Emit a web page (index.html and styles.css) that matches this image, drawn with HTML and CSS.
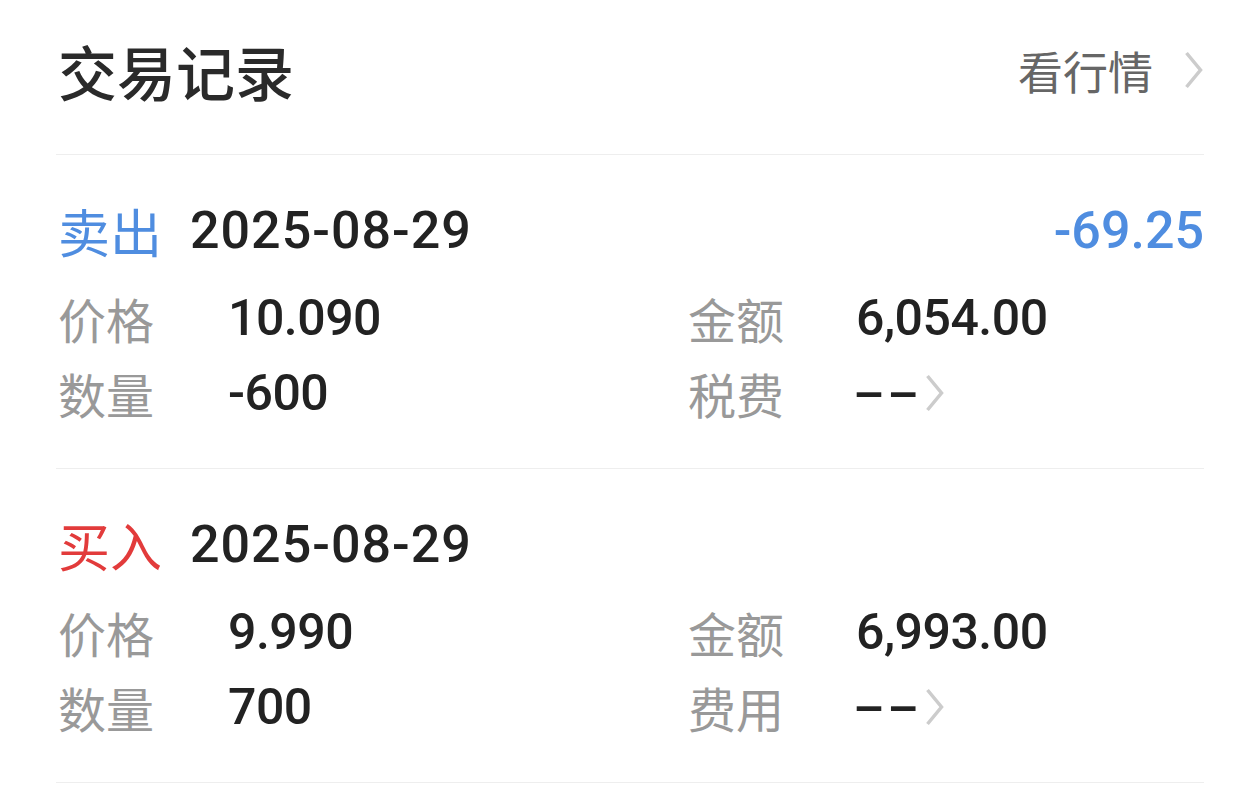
FILE: index.html
```html
<!DOCTYPE html>
<html lang="zh-CN">
<head>
  <meta charset="UTF-8" />
  <meta name="viewport" content="width=device-width, initial-scale=1.0">
  <title>交易记录</title>
  <link rel="stylesheet" href="styles.css">
</head>
<body>

  <div class="page">
    <div class="header">
      <h2>交易记录</h2>
      <a class="more">看行情
        <svg class="chev chev-lg" viewBox="0 0 20 40"><polyline points="3,3 17,20 3,37" /></svg>
      </a>
    </div>

    <div class="trade">
      <div class="trade-head">
        <span class="side sell">卖出</span>
        <span class="date">2025-08-29</span>
        <span class="pnl">-69.25</span>
      </div>
      <div class="grid">
        <span class="label">价格</span><span class="num">10.090</span>
        <span class="label">金额</span><span class="num">6,054.00</span>
        <span class="label">数量</span><span class="num">-600</span>
        <span class="label">税费</span>
        <span class="num link"><span class="dash">--</span>
          <svg class="chev" viewBox="0 0 20 40"><polyline points="3,3 17,20 3,37" /></svg>
        </span>
      </div>
    </div>

    <div class="trade">
      <div class="trade-head">
        <span class="side buy">买入</span>
        <span class="date">2025-08-29</span>
      </div>
      <div class="grid">
        <span class="label">价格</span><span class="num">9.990</span>
        <span class="label">金额</span><span class="num">6,993.00</span>
        <span class="label">数量</span><span class="num">700</span>
        <span class="label">费用</span>
        <span class="num link"><span class="dash">--</span>
          <svg class="chev" viewBox="0 0 20 40"><polyline points="3,3 17,20 3,37" /></svg>
        </span>
      </div>
    </div>
  </div>

</body>
</html>
```

FILE: styles.css
```css
body {
  margin: 0;
  background: #fff;
  font-family: "Noto Sans CJK SC", "Noto Sans", sans-serif;
  color: #222;
}

.page {
  padding: 0 56px;
}

.header {
  display: flex;
  align-items: center;
  justify-content: space-between;
  height: 140px;
  padding-bottom: 14px;
  border-bottom: 1px solid #eeeeee;
}

h2 {
  margin: 0;
  font-size: 59px;
  font-weight: 500;
  color: #2a2a2a;
  padding-left: 2px;
}

.more {
  display: flex;
  align-items: center;
  gap: 30px;
  font-size: 45px;
  color: #666;
}

.chev {
  width: 21px;
  height: 40px;
  fill: none;
  stroke: #cccccc;
  stroke-width: 3.5;
}

.trade {
  padding: 37px 0 38px 2px;
  border-bottom: 1px solid #eeeeee;
}

.trade-head {
  display: flex;
  align-items: center;
  height: 76px;
}

.side {
  font-size: 52px;
  width: 132px;
}

.sell {
  color: #4f8de0;
}

.buy {
  color: #e23b3b;
}

.date {
  font-family: Roboto, sans-serif;
  font-size: 52px;
  font-weight: 500;
  letter-spacing: 1px;
  color: #222;
}

.pnl {
  margin-left: auto;
  font-family: Roboto, sans-serif;
  font-size: 52px;
  font-weight: 500;
  color: #4f8de0;
}

.grid {
  display: grid;
  grid-template-columns: 170px 460px 168px 1fr;
  grid-auto-rows: 75px;
  align-items: center;
  margin-top: 12px;
}

.label {
  font-size: 48px;
  color: #999;
}

.num {
  font-family: Roboto, sans-serif;
  font-size: 50px;
  font-weight: 500;
  letter-spacing: -0.5px;
  color: #222;
}

.link {
  display: flex;
  align-items: center;
  gap: 19px;
}

.dash {
  display: inline-block;
  width: 52px;
  margin-left: -3px;
  letter-spacing: 1px;
  transform: scaleX(1.9);
  transform-origin: left center;
}
```
